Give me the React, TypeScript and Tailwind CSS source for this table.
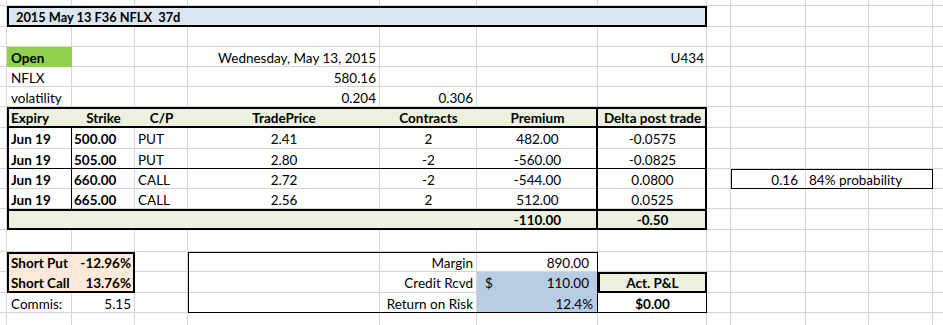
import React from "react";

const COLS = 13;
const ROWS = 17;

// one spreadsheet cell of text; place = literal grid placement classes
function Cell({ className = "", children }: { className?: string; children?: React.ReactNode }) {
  return <div className={"flex items-center whitespace-nowrap pt-px " + className}>{children}</div>;
}

export default function App() {
  return (
    <div className="h-[325px] w-[943px] overflow-hidden bg-white font-['Lato',sans-serif] text-[13.5px] leading-[16px] text-black">
      <div className="grid grid-cols-[7px_65px_63px_53px_192px_97px_121px_109px_24px_75px_63px_64px_64px] grid-rows-[6px_21px_20px_20px_20px_20px_21px_21px_20px_20px_20px_21px_22px_20px_21px_20px_20px]">
        {/* sheet gridlines */}
        <div className="col-span-full row-span-full grid grid-cols-subgrid grid-rows-subgrid">
          {Array.from({ length: COLS * ROWS }).map((_, i) => (
            <div key={i} className="border-r border-b border-[#d4d4d4]" />
          ))}
        </div>

        {/* fills and borders */}
        <div className="col-start-2 col-end-3 row-start-4 row-end-5 bg-[#92d050]" />
        <div className="col-start-2 col-end-9 row-start-7 row-end-8 border-b-2 border-black bg-[#ebf1de]" />
        <div className="col-start-2 col-end-9 row-start-12 row-end-13 border-t-2 border-black bg-[#ebf1de]" />
        <div className="col-start-2 col-end-3 row-start-8 row-end-12 border-r border-black" />
        <div className="col-start-2 col-end-9 row-start-9 row-end-10 border-b border-black" />
        <div className="col-start-7 col-end-8 row-start-7 row-end-13 border-r-2 border-black" />
        <div className="col-start-2 col-end-9 row-start-7 row-end-13 border-2 border-black" />
        <div className="col-start-10 col-end-13 row-start-10 row-end-11 border border-black" />
        <div className="col-start-2 col-end-4 row-start-14 row-end-16 border-2 border-black bg-[#fde9d9]" />
        <div className="col-start-7 col-end-8 row-start-15 row-end-17 bg-[#b8cce4]" />
        <div className="col-start-5 col-end-8 row-start-14 row-end-17 border border-black" />
        <div className="col-start-8 col-end-9 row-start-15 row-end-16 border-2 border-black bg-[#ebf1de]" />
        <div className="col-start-8 col-end-9 row-start-16 row-end-17 border-r border-b border-black" />

        {/* title */}
        <div className="col-start-2 col-end-9 row-start-2 row-end-3 flex items-center whitespace-pre border-2 border-black bg-[#dce6f1] pl-[7px] pt-px text-[12.8px] font-bold">
          2015 May 13 F36 NFLX  37d
        </div>

        {/* header block */}
        <Cell className="col-start-2 col-end-3 row-start-4 row-end-5 pl-[4px] font-bold">Open</Cell>
        <Cell className="col-start-4 col-end-6 row-start-4 row-end-5 justify-end pr-[4px]">Wednesday, May 13, 2015</Cell>
        <Cell className="col-start-8 col-end-9 row-start-4 row-end-5 justify-end pr-[3px]">U434</Cell>
        <Cell className="col-start-2 col-end-3 row-start-5 row-end-6 pl-[4px]">NFLX</Cell>
        <Cell className="col-start-5 col-end-6 row-start-5 row-end-6 justify-end pr-[4px]">580.16</Cell>
        <Cell className="col-start-2 col-end-3 row-start-6 row-end-7 pl-[4px]">volatility</Cell>
        <Cell className="col-start-5 col-end-6 row-start-6 row-end-7 justify-end pr-[4px]">0.204</Cell>
        <Cell className="col-start-6 col-end-7 row-start-6 row-end-7 justify-end pr-[4px]">0.306</Cell>

        {/* trade table head */}
        <Cell className="col-start-2 col-end-3 row-start-7 row-end-8 pl-[4px] font-bold">Expiry</Cell>
        <Cell className="col-start-3 col-end-4 row-start-7 row-end-8 justify-center font-bold">Strike</Cell>
        <Cell className="col-start-4 col-end-5 row-start-7 row-end-8 justify-center font-bold">C/P</Cell>
        <Cell className="col-start-5 col-end-6 row-start-7 row-end-8 justify-center font-bold">TradePrice</Cell>
        <Cell className="col-start-6 col-end-7 row-start-7 row-end-8 justify-center font-bold">Contracts</Cell>
        <Cell className="col-start-7 col-end-8 row-start-7 row-end-8 justify-center font-bold">Premium</Cell>
        <Cell className="col-start-8 col-end-9 row-start-7 row-end-8 justify-center font-bold">Delta post trade</Cell>

        {/* legs */}
        <Cell className="col-start-2 col-end-3 row-start-8 row-end-9 pl-[4px] font-bold">Jun 19</Cell>
        <Cell className="col-start-3 col-end-4 row-start-8 row-end-9 pl-[2px] font-bold">500.00</Cell>
        <Cell className="col-start-4 col-end-5 row-start-8 row-end-9 pl-[3px]">PUT</Cell>
        <Cell className="col-start-5 col-end-6 row-start-8 row-end-9 justify-center">2.41</Cell>
        <Cell className="col-start-6 col-end-7 row-start-8 row-end-9 justify-center">2</Cell>
        <Cell className="col-start-7 col-end-8 row-start-8 row-end-9 justify-center">482.00</Cell>
        <Cell className="col-start-8 col-end-9 row-start-8 row-end-9 justify-center">-0.0575</Cell>

        <Cell className="col-start-2 col-end-3 row-start-9 row-end-10 pl-[4px] font-bold">Jun 19</Cell>
        <Cell className="col-start-3 col-end-4 row-start-9 row-end-10 pl-[2px] font-bold">505.00</Cell>
        <Cell className="col-start-4 col-end-5 row-start-9 row-end-10 pl-[3px]">PUT</Cell>
        <Cell className="col-start-5 col-end-6 row-start-9 row-end-10 justify-center">2.80</Cell>
        <Cell className="col-start-6 col-end-7 row-start-9 row-end-10 justify-center">-2</Cell>
        <Cell className="col-start-7 col-end-8 row-start-9 row-end-10 justify-center">-560.00</Cell>
        <Cell className="col-start-8 col-end-9 row-start-9 row-end-10 justify-center">-0.0825</Cell>

        <Cell className="col-start-2 col-end-3 row-start-10 row-end-11 pl-[4px] font-bold">Jun 19</Cell>
        <Cell className="col-start-3 col-end-4 row-start-10 row-end-11 pl-[2px] font-bold">660.00</Cell>
        <Cell className="col-start-4 col-end-5 row-start-10 row-end-11 pl-[3px]">CALL</Cell>
        <Cell className="col-start-5 col-end-6 row-start-10 row-end-11 justify-center">2.72</Cell>
        <Cell className="col-start-6 col-end-7 row-start-10 row-end-11 justify-center">-2</Cell>
        <Cell className="col-start-7 col-end-8 row-start-10 row-end-11 justify-center">-544.00</Cell>
        <Cell className="col-start-8 col-end-9 row-start-10 row-end-11 justify-center">0.0800</Cell>
        <Cell className="col-start-10 col-end-11 row-start-10 row-end-11 justify-end pr-[8px]">0.16</Cell>
        <Cell className="col-start-11 col-end-13 row-start-10 row-end-11 pl-[3px]">84% probability</Cell>

        <Cell className="col-start-2 col-end-3 row-start-11 row-end-12 pl-[4px] font-bold">Jun 19</Cell>
        <Cell className="col-start-3 col-end-4 row-start-11 row-end-12 pl-[2px] font-bold">665.00</Cell>
        <Cell className="col-start-4 col-end-5 row-start-11 row-end-12 pl-[3px]">CALL</Cell>
        <Cell className="col-start-5 col-end-6 row-start-11 row-end-12 justify-center">2.56</Cell>
        <Cell className="col-start-6 col-end-7 row-start-11 row-end-12 justify-center">2</Cell>
        <Cell className="col-start-7 col-end-8 row-start-11 row-end-12 justify-center">512.00</Cell>
        <Cell className="col-start-8 col-end-9 row-start-11 row-end-12 justify-center">0.0525</Cell>

        {/* totals */}
        <Cell className="col-start-7 col-end-8 row-start-12 row-end-13 justify-center font-bold">-110.00</Cell>
        <Cell className="col-start-8 col-end-9 row-start-12 row-end-13 justify-center font-bold">-0.50</Cell>

        {/* risk summary */}
        <Cell className="col-start-2 col-end-3 row-start-14 row-end-15 pl-[4px] font-bold">Short Put</Cell>
        <Cell className="col-start-3 col-end-4 row-start-14 row-end-15 justify-end pr-[4px] font-bold">-12.96%</Cell>
        <Cell className="col-start-2 col-end-3 row-start-15 row-end-16 pl-[4px] font-bold">Short Call</Cell>
        <Cell className="col-start-3 col-end-4 row-start-15 row-end-16 justify-end pr-[4px] font-bold">13.76%</Cell>
        <Cell className="col-start-2 col-end-3 row-start-16 row-end-17 pl-[4px]">Commis:</Cell>
        <Cell className="col-start-3 col-end-4 row-start-16 row-end-17 justify-end pr-[4px]">5.15</Cell>

        <Cell className="col-start-6 col-end-7 row-start-14 row-end-15 justify-end pr-[4px]">Margin</Cell>
        <Cell className="col-start-7 col-end-8 row-start-14 row-end-15 justify-end pr-[9px]">890.00</Cell>
        <Cell className="col-start-6 col-end-7 row-start-15 row-end-16 justify-end pr-[4px]">Credit Rcvd</Cell>
        <Cell className="col-start-7 col-end-8 row-start-15 row-end-16 justify-between pl-[8px] pr-[9px]">
          <span>$</span>
          <span>110.00</span>
        </Cell>
        <Cell className="col-start-6 col-end-7 row-start-16 row-end-17 justify-end pr-[4px]">Return on Risk</Cell>
        <Cell className="col-start-7 col-end-8 row-start-16 row-end-17 justify-end pr-[5px]">12.4%</Cell>

        <Cell className="col-start-8 col-end-9 row-start-15 row-end-16 justify-center font-bold">Act. P&amp;L</Cell>
        <Cell className="col-start-8 col-end-9 row-start-16 row-end-17 justify-center font-bold">$0.00</Cell>
      </div>
    </div>
  );
}
